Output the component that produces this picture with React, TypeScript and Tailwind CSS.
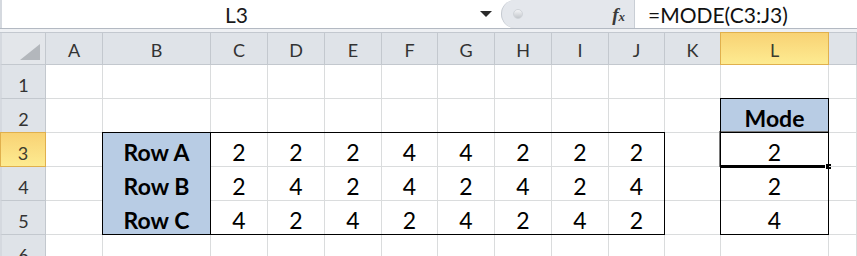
import React from "react";

const cols = ["A", "B", "C", "D", "E", "F", "G", "H", "I", "J", "K", "L", "M"];

type Cell = { t?: string; bold?: boolean; blue?: boolean };

const data: Record<number, Record<string, Cell>> = {
  2: { L: { t: "Mode", bold: true, blue: true } },
  3: {
    B: { t: "Row A", bold: true, blue: true },
    C: { t: "2" }, D: { t: "2" }, E: { t: "2" }, F: { t: "4" }, G: { t: "4" }, H: { t: "2" }, I: { t: "2" }, J: { t: "2" },
    L: { t: "2" },
  },
  4: {
    B: { t: "Row B", bold: true, blue: true },
    C: { t: "2" }, D: { t: "4" }, E: { t: "2" }, F: { t: "4" }, G: { t: "2" }, H: { t: "4" }, I: { t: "2" }, J: { t: "4" },
    L: { t: "2" },
  },
  5: {
    B: { t: "Row C", bold: true, blue: true },
    C: { t: "4" }, D: { t: "2" }, E: { t: "4" }, F: { t: "2" }, G: { t: "4" }, H: { t: "2" }, I: { t: "4" }, J: { t: "2" },
    L: { t: "4" },
  },
};

const gridCls =
  "grid grid-cols-[46px_57px_108px_57px_57px_57px_56px_57px_57px_57px_56px_56px_108px_28px] grid-rows-[32px_34px_34px_34px_34px_34px_34px]";

export default function App() {
  const rows = [1, 2, 3, 4, 5, 6];
  return (
    <div
      className="w-[857px] h-[256px] overflow-hidden bg-white relative"
      style={{ fontFamily: "Lato, 'Open Sans', sans-serif" }}
    >
      {/* Formula bar */}
      <div className="flex h-[29px] border-b border-[#b3b9c2]">
        <div className="w-[501px] flex items-center border-l-2 border-[#d5d9df]">
          <div className="flex-1 text-center text-[21px] text-[#1a1a1a] leading-none">L3</div>
          <div className="w-[30px] flex justify-center">
            <div className="w-0 h-0 border-l-[6px] border-r-[6px] border-t-[6px] border-l-transparent border-r-transparent border-t-[#2a2a2a]" />
          </div>
        </div>
        <div className="w-[134px] bg-[#e4e7ec] rounded-l-[16px] border-l border-[#c4c9d0] border-r border-r-[#c9ced5] flex items-center pl-[11px] pr-[9px]">
          <div className="w-[10px] h-[10px] rounded-full bg-gradient-to-b from-[#f4f5f7] to-[#c3c7cc] border border-[#d0d4d9]" />
          <div className="flex-1" />
          <span
            className="text-[#3a3a3a] italic font-bold text-[19px] leading-none"
            style={{ fontFamily: "'Liberation Serif', serif" }}
          >
            f<span className="text-[13px]">x</span>
          </span>
        </div>
        <div className="flex-1 flex items-center pl-[13px] text-[21px] text-[#111] leading-none whitespace-nowrap">
          =MODE(C3:J3)
        </div>
      </div>
      <div className="h-[4px] bg-[#eef0f3] border-b border-[#c3c8cf]" />

      {/* Sheet grid */}
      <div className="relative">
        <div className={gridCls}>
          {/* corner */}
          <div className="bg-[#e3e6ea] border-r border-b border-l-2 border-[#c3c8ce] border-l-[#d5d9df] relative">
            <div className="absolute right-[5px] bottom-[4px] w-0 h-0 border-l-[20px] border-b-[16px] border-l-transparent border-b-[#b3b7bc]" />
          </div>
          {cols.map((c) =>
            c === "L" ? (
              <div
                key={c}
                className="bg-gradient-to-b from-[#f8d274] to-[#fdeb91] border border-[#e0b04d] -ml-px -mt-px flex items-center justify-center text-[18px] text-[#3b3b2f] pt-[3px]"
              >
                {c}
              </div>
            ) : (
              <div
                key={c}
                className="bg-[#dfe3e8] border-r border-b border-[#c3c8ce] flex items-center justify-center text-[18px] text-[#333] pt-[3px]"
              >
                {c === "M" ? "" : c}
              </div>
            )
          )}
          {rows.map((r) => (
            <React.Fragment key={r}>
              {r === 3 ? (
                <div className="bg-gradient-to-b from-[#f8d274] to-[#fdeb91] border border-[#e0b04d] -mt-px flex items-end justify-center text-[18px] leading-[20px] text-[#3b3b2f] pb-[3px]">
                  {r}
                </div>
              ) : (
                <div className="bg-[#dfe3e8] border-r border-b border-l-2 border-[#c3c8ce] border-l-[#d5d9df] flex items-end justify-center text-[18px] leading-[20px] text-[#333] pb-[3px]">
                  {r}
                </div>
              )}
              {cols.map((c) => {
                const cell = data[r]?.[c];
                const selected = r === 3 && c === "L";
                return (
                  <div
                    key={c}
                    className={
                      "relative border-r border-b flex items-end justify-center text-[23px] leading-[28px] text-black whitespace-nowrap " +
                      (cell?.blue ? "bg-[#b8cce4] border-[#b8cce4] " : "border-[#dadcdd] ") +
                      (cell?.bold ? "font-bold" : "")
                    }
                  >
                    {cell?.t ?? ""}
                    {selected && (
                      <>
                        <div className="absolute -left-[2px] -top-[2px] -right-px -bottom-px border border-[#7a7a7a]" />
                        <div className="absolute -left-px right-0 -bottom-[2px] h-[3px] bg-black" />
                        <div className="absolute -right-[4px] -bottom-[4px] w-[7px] h-[7px] bg-black border border-white" />
                      </>
                    )}
                  </div>
                );
              })}
            </React.Fragment>
          ))}
        </div>
        {/* table borders overlay */}
        <div className={"absolute inset-0 pointer-events-none " + gridCls}>
          <div className="col-start-3 col-end-12 row-start-4 row-end-7 -ml-px -mt-px border border-black" />
          <div className="col-start-3 col-end-4 row-start-4 row-end-7 -ml-px -mt-px border border-black" />
          <div className="col-start-13 col-end-14 row-start-3 row-end-4 -ml-px -mt-px border border-black" />
          <div className="col-start-13 col-end-14 row-start-4 row-end-7 -ml-px -mt-px border border-black" />
        </div>
      </div>
    </div>
  );
}
